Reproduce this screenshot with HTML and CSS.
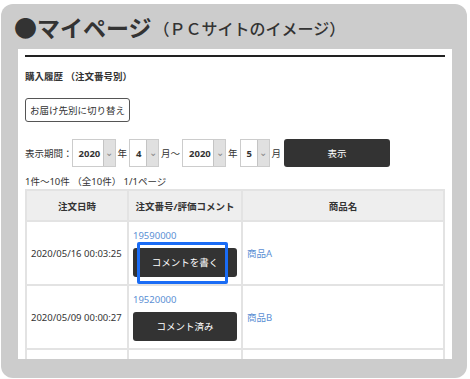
FILE: index.html
```html
<!DOCTYPE html>
<html lang="ja">
<head>
    <meta charset="UTF-8">
    <title>マイページ</title>
    <link rel="stylesheet" href="styles.css">
</head>
<body>
    <div class="frame">
        <h1 class="title"><span class="title-main">●マイページ</span><span class="title-sub">（ＰＣサイトのイメージ）</span></h1>
        <div class="page">
            <div class="page-inner">
                <h2 class="section-title">購入履歴 （注文番号別）</h2>
                <button class="switch-btn">お届け先別に切り替え</button>

                <div class="filter">
                    <span class="filter-label">表示期間：</span>
                    <span class="select wide"><span class="select-value">2020</span><span class="select-arrow">&#8964;</span></span>
                    <span class="unit">年</span>
                    <span class="select"><span class="select-value">4</span><span class="select-arrow">&#8964;</span></span>
                    <span class="unit">月～</span>
                    <span class="select wide"><span class="select-value">2020</span><span class="select-arrow">&#8964;</span></span>
                    <span class="unit">年</span>
                    <span class="select"><span class="select-value">5</span><span class="select-arrow">&#8964;</span></span>
                    <span class="unit">月</span>
                    <button class="show-btn">表示</button>
                </div>

                <p class="count">1件～10件 （全10件） 1/1ページ</p>

                <table class="orders">
                    <colgroup>
                        <col class="col-date">
                        <col class="col-no">
                        <col class="col-item">
                    </colgroup>
                    <tr>
                        <th>注文日時</th>
                        <th>注文番号/評価コメント</th>
                        <th>商品名</th>
                    </tr>
                    <tr>
                        <td>2020/05/16 00:03:25</td>
                        <td class="cell-no">
                            <a href="#" class="order-link">19590000</a>
                            <button class="comment-btn">コメントを書く</button>
                            <span class="highlight"></span>
                        </td>
                        <td><a href="#" class="item-link">商品A</a></td>
                    </tr>
                    <tr>
                        <td>2020/05/09 00:00:27</td>
                        <td class="cell-no">
                            <a href="#" class="order-link">19520000</a>
                            <button class="comment-btn">コメント済み</button>
                        </td>
                        <td><a href="#" class="item-link">商品B</a></td>
                    </tr>
                    <tr>
                        <td>&nbsp;</td>
                        <td>&nbsp;</td>
                        <td>&nbsp;</td>
                    </tr>
                </table>
            </div>
        </div>
    </div>
</body>
</html>
```

FILE: styles.css
```css
body {
    margin: 0;
    background: #fff;
    color: #333;
    font-family: "Noto Sans", "Noto Sans CJK JP", sans-serif;
}
.frame {
    margin: 4px 3px 1px 1px;
    height: 374px;
    box-sizing: border-box;
    padding: 0 15px 19px 17px;
    background: #ccc;
    border-radius: 12px;
}
.title {
    margin: 0 0 0 -4px;
    height: 45px;
    display: flex;
    align-items: center;
    font-family: "Noto Sans CJK JP", sans-serif;
    color: #333;
}
.title-main {
    font-size: 23px;
    font-weight: bold;
}
.title-sub {
    font-size: 16px;
    font-weight: 500;
    margin-top: 3px;
    margin-left: 2px;
}
.page {
    height: 310px;
    box-sizing: border-box;
    padding: 6px 7px 0;
    background: #fff;
    overflow: hidden;
}
.page-inner {
    border-top: 2px solid #222;
    font-size: 9.5px;
}
.section-title {
    margin: 14px 0 0;
    font-size: 9.5px;
    line-height: 12px;
    font-weight: bold;
}
.switch-btn {
    display: block;
    margin-top: 15px;
    width: 105px;
    height: 24px;
    padding: 0;
    background: #fff;
    border: 1px solid #555;
    border-radius: 3px;
    color: #333;
    font-family: inherit;
    font-size: 9.5px;
}
.filter {
    margin-top: 17px;
    display: flex;
    align-items: center;
    height: 28px;
}
.filter-label {
    margin-right: -1px;
}
.select {
    display: flex;
    width: 30px;
    height: 28px;
    box-sizing: border-box;
    border: 1px solid #ccc;
    background: #fff;
}
.select.wide {
    width: 44px;
}
.select-value {
    flex: 1;
    display: flex;
    align-items: center;
    padding-left: 6px;
    font-weight: bold;
}
.select-arrow {
    width: 11px;
    background: #e0e0e0;
    border-left: 1px solid #c4c4c4;
    color: #888;
    font-size: 10px;
    text-align: center;
    line-height: 24px;
}
.unit {
    margin: 0 2px;
}
.show-btn {
    margin-left: 1px;
    width: 106px;
    height: 28px;
    background: #333;
    color: #fff;
    border: none;
    border-radius: 3px;
    font-family: inherit;
    font-size: 9.5px;
}
.count {
    margin: 9px 0 1px;
    line-height: 12px;
}
.orders {
    width: 420px;
    border-collapse: collapse;
    table-layout: fixed;
}
.col-date { width: 102px; }
.col-no { width: 114px; }
.orders th,
.orders td {
    border: 2px solid #e3e3e3;
    padding: 0 4px;
    text-align: left;
    vertical-align: middle;
}
.orders th {
    height: 29px;
    background: #eee;
    text-align: center;
    font-weight: bold;
}
.orders td {
    height: 62px;
}
.cell-no {
    position: relative;
}
.order-link,
.item-link {
    color: #5b8fd4;
    text-decoration: none;
}
.order-link {
    display: block;
    line-height: 12px;
    margin-bottom: 6px;
}
.comment-btn {
    display: block;
    width: 100%;
    height: 29px;
    background: #333;
    color: #fff;
    border: none;
    border-radius: 3px;
    font-family: inherit;
    font-size: 9.5px;
}
.highlight {
    position: absolute;
    left: 8px;
    top: 20px;
    width: 85px;
    height: 36px;
    border: 3px solid #1a6cf5;
    border-radius: 2px;
}
```
